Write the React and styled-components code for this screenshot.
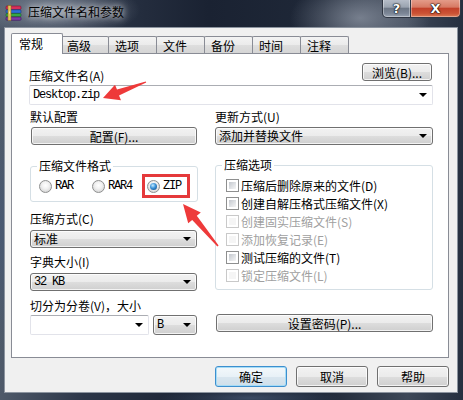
import React from 'react';
import styled, { createGlobalStyle, css } from 'styled-components';

const Global = createGlobalStyle`
  html, body { margin: 0; padding: 0; background: #1d2636; }
  body { font-family: "Noto Sans CJK SC", "Noto Sans", sans-serif; font-size: 12px; color: #000; }
  * { box-sizing: border-box; }
`;

const Window = styled.div`
  position: relative;
  width: 463px;
  height: 400px;
  overflow: hidden;
  display: flex;
  flex-direction: column;
  background:
    radial-gradient(ellipse 80px 28px at 60px 10px, rgba(190, 198, 210, 0.55), rgba(190, 198, 210, 0) 100%),
    radial-gradient(ellipse 70px 40px at 360px 18px, rgba(150, 158, 172, 0.7), rgba(150, 158, 172, 0) 100%),
    radial-gradient(ellipse 40px 120px at 0px 230px, rgba(70, 90, 120, 0.6), rgba(70, 90, 120, 0) 100%),
    radial-gradient(ellipse 90px 10px at 250px 398px, rgba(80, 100, 130, 0.6), rgba(80, 100, 130, 0) 100%),
    linear-gradient(90deg, #4f5a6a 0%, #2c3648 18%, #1a2232 45%, #1f2838 70%, #3e4858 88%, #263040 100%);
`;

const TitleBar = styled.div`
  height: 27px;
  flex: none;
  display: flex;
  align-items: flex-start;
  padding-left: 5px;
`;

const AppIcon = styled.svg`
  margin-top: 5px;
  flex: none;
`;

const Title = styled.div`
  margin-left: 6px;
  padding-top: 5px;
  line-height: 14px;
  font-size: 12px;
  color: #000;
  text-shadow: 0 0 6px rgba(255, 255, 255, 0.8), 0 0 10px rgba(255, 255, 255, 0.6);
`;

const CaptionGroup = styled.div`
  display: flex;
  margin-left: auto;
  margin-right: 2px;
  margin-top: -1px;
`;

const CaptionButton = styled.div`
  width: ${p => p.$w}px;
  height: 19px;
  border: 1px solid #2f3643;
  border-top: none;
  display: flex;
  align-items: center;
  justify-content: center;
  color: #fff;
  font: bold 13px "DejaVu Sans", sans-serif;
  text-shadow: 0 0 2px #000, 0 0 1px #000, 0 0 1px #000;
  box-shadow: inset 0 0 0 1px rgba(255, 255, 255, 0.35);
  ${p => p.$close
    ? css`
        background: linear-gradient(#e5a08e 0%, #d77a64 45%, #c2412a 52%, #cc5335 80%, #db7a55 100%);
        border-radius: 0 0 5px 0;
        border-left: none;
      `
    : css`
        background: linear-gradient(#b9c0cb 0%, #9aa3b0 45%, #6d7786 52%, #7c8696 80%, #99a3b1 100%);
        border-radius: 0 0 0 5px;
      `}
`;

const Client = styled.div`
  flex: 1;
  margin: 0 5px 7px 4px;
  background: #f0f0f0;
  border: 1px solid #8c949f;
  padding: 5px 8px 0 6px;
  display: flex;
  flex-direction: column;
`;

const TabStrip = styled.div`
  position: relative;
  z-index: 1;
  display: flex;
  align-items: flex-start;
  height: 21px;
  margin-bottom: -1px;
  padding-left: 2px;
`;

const Tab = styled.div`
  flex: none;
  line-height: 15px;
  border: 1px solid #898c95;
  border-bottom: none;
  ${p => p.$active
    ? css`
        position: relative;
        z-index: 2;
        width: 52px;
        height: 21px;
        margin: 0 -2px 0 -2px;
        padding: 2px 0 0 7px;
        background: #fff;
        border-radius: 2px 2px 0 0;
      `
    : css`
        width: 49px;
        height: 17px;
        margin: 3px 0 0 -1px;
        padding: 1px 0 0 6px;
        background: linear-gradient(#f3f3f3 0%, #ebebeb 50%, #dedede 51%, #d5d5d5 100%);
        border-radius: 2px 2px 0 0;
      `}
`;

const Panel = styled.div`
  width: 438px;
  height: 305px;
  background: #fff;
  border: 1px solid #898c95;
  padding: 8px 15px 0 17px;
  display: flex;
  flex-direction: column;
`;

const TopRow = styled.div`
  display: flex;
  justify-content: space-between;
  align-items: flex-start;
  height: 23px;
`;

const Label = styled.div`
  line-height: 14px;
  height: 14px;
  white-space: nowrap;
  margin-top: ${p => p.$mt || 0}px;
  padding-top: ${p => p.$pt || 0}px;
  box-sizing: content-box;
`;

const Button = styled.div`
  display: flex;
  align-items: center;
  justify-content: center;
  height: ${p => p.$h || 18}px;
  width: ${p => (p.$w ? `${p.$w}px` : 'auto')};
  margin-top: ${p => p.$mt || 0}px;
  margin-left: ${p => p.$ml || 0}px;
  margin-right: ${p => p.$mr || 0}px;
  border: 1px solid #707070;
  border-radius: 3px;
  white-space: nowrap;
  background: linear-gradient(#f2f2f2 0%, #ebebeb 50%, #dddddd 51%, #cfcfcf 100%);
  box-shadow: inset 0 0 0 1px rgba(255, 255, 255, 0.75);
  ${p => p.$default && css`
    border-color: #3c8fcf;
    background: linear-gradient(#f3f8fb 0%, #e8f1f7 50%, #d9e6ef 51%, #cfdfea 100%);
    box-shadow: inset 0 0 0 1px #a6dcf6;
  `}
`;

const ComboBase = styled.div`
  position: relative;
  display: flex;
  align-items: center;
  height: ${p => p.$h || 18}px;
  width: ${p => (p.$w ? `${p.$w}px` : '100%')};
  margin-top: ${p => p.$mt || 0}px;
  padding-left: 3px;
  white-space: nowrap;
  flex: none;
  ${p => p.$editable
    ? css`
        background: #fff;
        border: 1px solid #e2e3ea;
        border-top-color: #abadb3;
        border-radius: 2px;
      `
    : css`
        border: 1px solid #707070;
        border-radius: 3px;
        background: linear-gradient(#f2f2f2 0%, #ebebeb 50%, #dddddd 51%, #cfcfcf 100%);
        box-shadow: inset 0 0 0 1px rgba(255, 255, 255, 0.75);
      `}
`;

const monoFont = css`
  font-family: "Liberation Mono", "DejaVu Sans Mono", monospace;
  font-size: 12px;
  letter-spacing: -1.2px;
`;

const ComboText = styled.span`
  flex: 1;
  line-height: 14px;
  ${p => p.$mono && monoFont}
`;

const Arrow = styled.span`
  flex: none;
  width: 0;
  height: 0;
  margin-right: 5px;
  border-left: 4px solid transparent;
  border-right: 4px solid transparent;
  border-top: 4px solid #000;
`;

const Combo = ({ children, mono, ...rest }) => (
  <ComboBase {...rest}>
    <ComboText $mono={mono}>{children}</ComboText>
    <Arrow />
  </ComboBase>
);

const Columns = styled.div`
  display: grid;
  grid-template-columns: 167px 218px;
  column-gap: 18px;
  margin-left: 1px;
`;

const Column = styled.div`
  display: flex;
  flex-direction: column;
  align-items: flex-start;
`;

const Group = styled.fieldset`
  margin: ${p => p.$mt}px 0 0 0;
  width: ${p => p.$w}px;
  min-width: 0;
  padding: 0 0 ${p => p.$pb}px 6px;
  border: 1px solid #d5dfe5;
  border-radius: 3px;
`;

const Legend = styled.legend`
  padding: 0 2px;
  line-height: 14px;
  height: 14px;
  font-size: 12px;
`;

const RadioRow = styled.div`
  display: flex;
  margin-top: 6px;
  padding-left: 2px;
  height: 14px;
  align-items: center;
`;

const RadioItem = styled.div`
  display: flex;
  align-items: center;
  width: ${p => p.$w}px;
  height: 14px;
  gap: 3px;
  flex: none;
  ${p => p.$marked && css`
    outline: 3px solid #e5393b;
    outline-offset: 2px;
  `}
`;

const RadioCircle = styled.span`
  flex: none;
  width: 13px;
  height: 13px;
  border-radius: 50%;
  border: 1px solid #8e8f8f;
  background: radial-gradient(circle at 50% 40%, #ffffff 0%, #f1f1f1 40%, #c9c9c9 100%);
  display: flex;
  align-items: center;
  justify-content: center;
  ${p => p.$checked && css`
    &::after {
      content: '';
      width: 7px;
      height: 7px;
      border-radius: 50%;
      background: radial-gradient(circle at 40% 35%, #c5ecff 0%, #3b92d8 45%, #0b3c73 100%);
    }
  `}
`;

const MonoText = styled.span`
  ${monoFont}
  line-height: 14px;
`;

const CheckList = styled.div`
  display: flex;
  flex-direction: column;
  margin-top: 4px;
  padding-left: 4px;
`;

const CheckRow = styled.div`
  display: flex;
  align-items: center;
  gap: 2px;
  height: 18px;
  color: ${p => (p.$disabled ? '#a0a0a0' : '#000')};
  white-space: nowrap;
`;

const CheckBox = styled.span`
  flex: none;
  width: 13px;
  height: 13px;
  padding: 2px;
  background: #fff;
  border: 1px solid ${p => (p.$disabled ? '#c9c9c9' : '#8e8f8f')};
  &::after {
    content: '';
    display: block;
    width: 100%;
    height: 100%;
    background: ${p => (p.$disabled ? '#f5f5f5' : 'linear-gradient(135deg, #c4c8ce 0%, #e2e4e7 60%, #f4f4f4 100%)')};
  }
`;

const SplitRow = styled.div`
  display: flex;
  gap: 4px;
  margin-top: 2px;
  width: 167px;
`;

const Footer = styled.div`
  display: flex;
  justify-content: flex-end;
  gap: 9px;
  margin-top: 8px;
`;

const Overlay = styled.svg`
  position: absolute;
  left: 0;
  top: 0;
  pointer-events: none;
`;

const WinRarIcon = () => (
  <AppIcon width="17" height="16" viewBox="0 0 17 16">
    <rect x="1" y="1" width="15" height="3.5" rx="1" fill="#d62f5a" stroke="#7a1030" strokeWidth="0.6" />
    <rect x="1" y="4.8" width="15" height="3.4" rx="1" fill="#2f6fd6" stroke="#123a80" strokeWidth="0.6" />
    <rect x="1" y="8.5" width="15" height="3.3" rx="1" fill="#36a843" stroke="#15602a" strokeWidth="0.6" />
    <rect x="1" y="12" width="15" height="3.3" rx="1" fill="#7d3aa6" stroke="#3e1560" strokeWidth="0.6" />
    <rect x="3" y="0.5" width="3" height="15" fill="#e6c45a" stroke="#8a6a18" strokeWidth="0.5" />
    <rect x="4" y="6.5" width="1" height="2" fill="#fff3b0" />
  </AppIcon>
);

const tabs = ['常规', '高级', '选项', '文件', '备份', '时间', '注释'];

const options = [
  { text: '压缩后删除原来的文件(D)' },
  { text: '创建自解压格式压缩文件(X)' },
  { text: '创建固实压缩文件(S)', disabled: true },
  { text: '添加恢复记录(E)', disabled: true },
  { text: '测试压缩的文件(T)' },
  { text: '锁定压缩文件(L)', disabled: true },
];

export default function App() {
  return (
    <>
      <Global />
      <Window>
        <TitleBar>
          <WinRarIcon />
          <Title>压缩文件名和参数</Title>
          <CaptionGroup>
            <CaptionButton $w={29}>?</CaptionButton>
            <CaptionButton $w={50} $close>X</CaptionButton>
          </CaptionGroup>
        </TitleBar>
        <Client>
          <TabStrip>
            {tabs.map((t, i) => (
              <Tab key={t} $active={i === 0}>{t}</Tab>
            ))}
          </TabStrip>
          <Panel>
            <TopRow>
              <Label $pt={7}>压缩文件名(A)</Label>
              <Button $w={70} $mt={1} $mr={1}>浏览(B)...</Button>
            </TopRow>
            <ComboBase $editable $h={20} $w={404}>
              <ComboText $mono>Desktop.zip</ComboText>
              <Arrow />
            </ComboBase>
            <Columns>
              <Column>
                <Label $mt={5}>默认配置</Label>
                <Button $mt={3} $ml={1} $w={166}>配置(F)...</Button>
                <Group $mt={14} $w={168} $pb={8}>
                  <Legend>压缩文件格式</Legend>
                  <RadioRow>
                    <RadioItem $w={53}><RadioCircle /><MonoText>RAR</MonoText></RadioItem>
                    <RadioItem $w={55}><RadioCircle /><MonoText>RAR4</MonoText></RadioItem>
                    <RadioItem $w={38} $marked><RadioCircle $checked /><MonoText>ZIP</MonoText></RadioItem>
                  </RadioRow>
                </Group>
                <Label $mt={10}>压缩方式(C)</Label>
                <Combo $mt={4} $w={167}>标准</Combo>
                <Label $mt={7}>字典大小(I)</Label>
                <Combo $mt={4} $w={167} mono>32 KB</Combo>
                <Label $mt={8}>切分为分卷(V)，大小</Label>
                <SplitRow>
                  <Combo $editable $h={20} $w={119}></Combo>
                  <Combo $h={20} $w={44} mono>B</Combo>
                </SplitRow>
              </Column>
              <Column>
                <Label $mt={5}>更新方式(U)</Label>
                <Combo $mt={3} $w={218}>添加并替换文件</Combo>
                <Group $mt={13} $w={218} $pb={5}>
                  <Legend>压缩选项</Legend>
                  <CheckList>
                    {options.map(o => (
                      <CheckRow key={o.text} $disabled={o.disabled}>
                        <CheckBox $disabled={o.disabled} />
                        <span>{o.text}</span>
                      </CheckRow>
                    ))}
                  </CheckList>
                </Group>
                <Button $mt={24} $ml={1} $w={217}>设置密码(P)...</Button>
              </Column>
            </Columns>
          </Panel>
          <Footer>
            <Button $w={72} $h={21} $default>确定</Button>
            <Button $w={72} $h={21}>取消</Button>
            <Button $w={72} $h={21}>帮助</Button>
          </Footer>
        </Client>
        <Overlay width="463" height="400" viewBox="0 0 463 400">
          <polygon
            fill="#ee3a3a"
            points="146.2,82.6 119.0,95.4 121.0,100.2 103,98 115.0,84.7 117.0,89.4 145.8,81.4"
          />
          <polygon
            fill="#ee3a3a"
            points="217.4,246.4 192.2,219.9 188.2,223.2 183,204 200.8,212.5 196.8,215.7 218.6,245.6"
          />
        </Overlay>
      </Window>
    </>
  );
}
